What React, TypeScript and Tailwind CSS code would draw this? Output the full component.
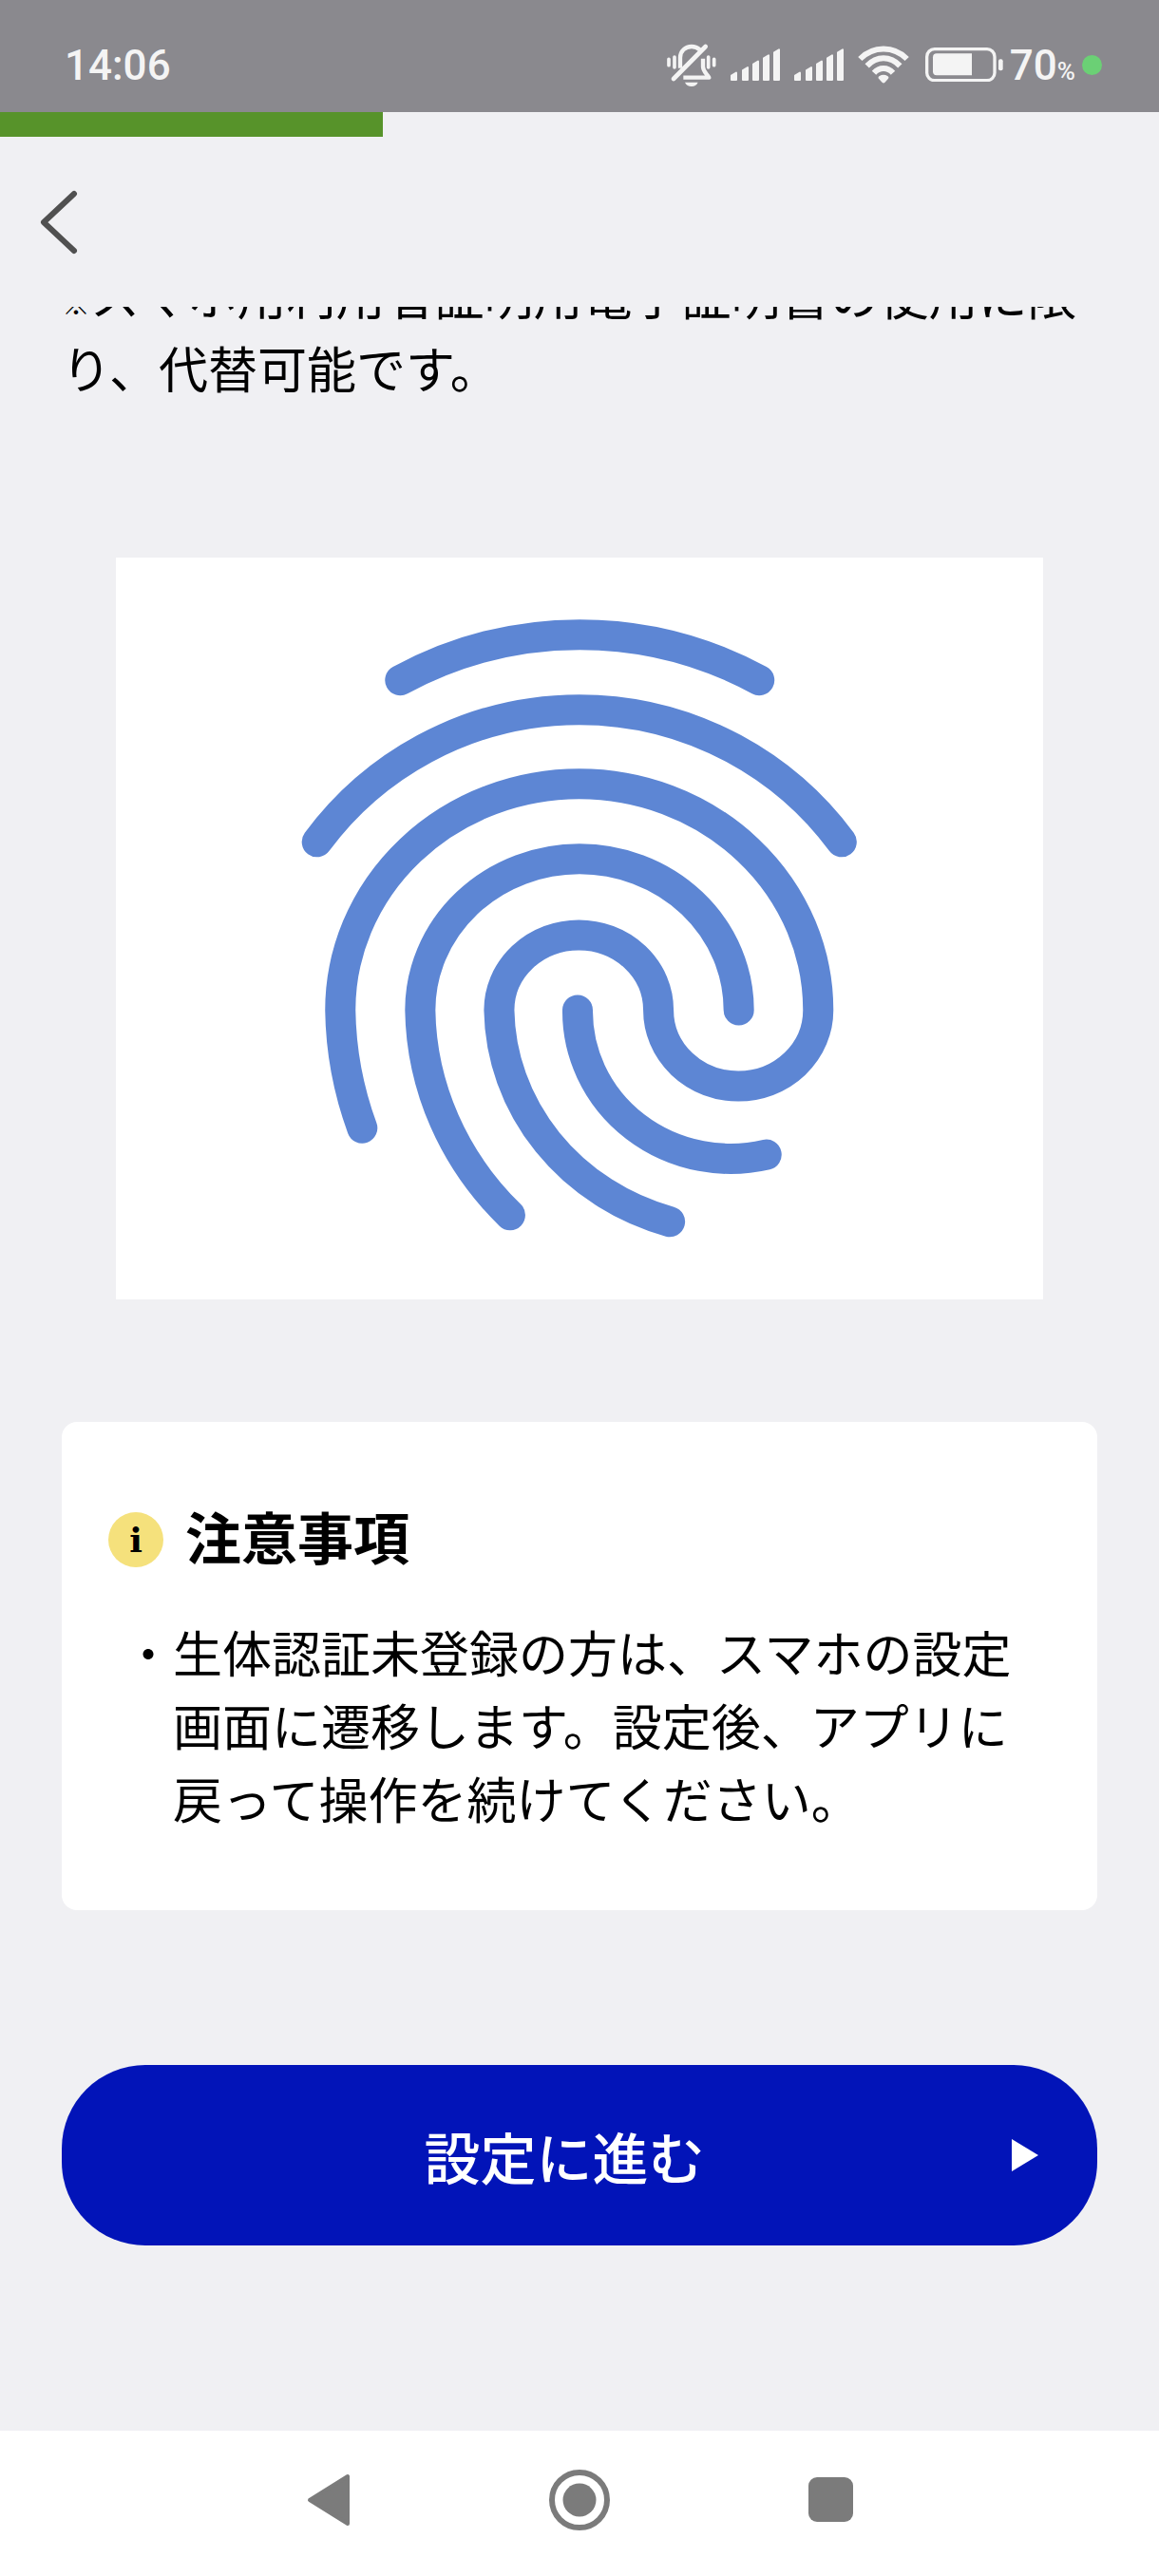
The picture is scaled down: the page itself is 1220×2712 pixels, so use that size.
import React from "react";

const BARS = [
  { x: 270, top: 165 },
  { x: 306, top: 148 },
  { x: 339, top: 129 },
  { x: 372, top: 110 },
  { x: 405, top: 92 },
];

export default function App() {
  return (
    <div className="flex min-h-screen flex-col bg-[#f0f0f3] font-['Noto_Sans_CJK_JP',sans-serif] text-black">
      <StatusBar />
      <div className="h-[26px] w-full">
        <div className="h-full w-[33%] bg-[#57932a]" />
      </div>

      <header className="flex h-[179px] items-center px-[33px]">
        <button type="button" aria-label="戻る" className="p-2">
          <BackChevron />
        </button>
      </header>

      <main className="flex flex-1 flex-col overflow-hidden px-[65px]">
        <p className="-mt-[52px] text-[52px] leading-[77px]">
          <span className="align-middle text-[30px] leading-none font-bold">※</span>
          スマホ用利用者証明用電子証明書の使用に限り、代替可能です。
        </p>

        <div className="mx-[57px] mt-[162px] bg-white">
          <Fingerprint />
        </div>

        <section className="mt-[129px] rounded-2xl bg-white px-[49px] pt-[77px] pb-[80px]">
          <div className="flex items-center gap-[23px]">
            <span className="flex size-[58px] items-center justify-center rounded-full bg-[#f5e17c] font-['DejaVu_Serif',serif] text-[36px] leading-none font-bold">
              i
            </span>
            <h2 className="pb-2 text-[59px] leading-[86px] font-bold">注意事項</h2>
          </div>
          <ul className="mt-8 ml-4 text-[52px] leading-[77px]">
            <li className="flex">
              <span>・</span>
              <span className="flex-1">
                生体認証未登録の方は、スマホの設定画面に遷移します。設定後、アプリに戻って操作を続けてください。
              </span>
            </li>
          </ul>
        </section>

        <button
          type="button"
          className="mt-[163px] mb-[195px] flex h-[190px] items-center rounded-[88px] bg-[#0214b8] px-[62px] text-white"
        >
          <span className="flex-1 pt-0.5 pr-1 text-center text-[59px] leading-[87px] font-medium">
            設定に進む
          </span>
          <svg viewBox="0 0 28 34" className="h-[34px] w-[28px]" fill="currentColor">
            <path d="M0 0 28 17 0 34Z" />
          </svg>
        </button>
      </main>

      <NavigationBar />
    </div>
  );
}

function StatusBar() {
  return (
    <div className="flex h-[118px] items-center justify-between bg-[#8a898e] pt-[18px] pr-[60px] pl-[68px] font-[Roboto,sans-serif] text-[#f4f4f4]">
      <span className="pt-0.5 text-[44px] leading-none font-medium">14:06</span>
      <div className="flex items-center gap-[17px]">
        <div className="flex items-center gap-[15px]">
          <MutedBell />
          <Signal />
          <Signal />
          <Wifi />
        </div>
        <div className="flex items-center gap-[7px]">
          <Battery />
          <span className="flex items-baseline pt-0.5 text-[44px] leading-none font-medium">
            70<span className="text-[26px] leading-none">%</span>
          </span>
          <span className="size-[21px] rounded-full bg-[#6bd075]" />
        </div>
      </div>
    </div>
  );
}

function MutedBell() {
  return (
    <svg viewBox="66 66 156 150" className="h-[50px] w-[52px]" fill="none" stroke="currentColor" strokeLinecap="round">
      <path d="M108 152V119C108 98 124 84 144 84C154 84 163 88 171 95" strokeWidth="13" strokeLinecap="butt" />
      <path d="M180 122V148C180 162 190 168 199 182H118" strokeWidth="13" strokeLinejoin="round" strokeLinecap="butt" />
      <path d="M87 186 188 84" strokeWidth="14" />
      <path d="M90 117V150M197 117V150" strokeWidth="11" />
      <path d="M72 124V143M215 124V143" strokeWidth="11" />
      <path d="M123 197H164C160 206 153 210 144 210C134 210 127 206 123 197Z" fill="currentColor" stroke="none" />
    </svg>
  );
}

function Signal() {
  return (
    <svg viewBox="270 92 156 102" className="h-[34px] w-[52px]" fill="currentColor" stroke="currentColor" strokeWidth="6" strokeLinejoin="round">
      {BARS.map(({ x, top }) => (
        <path key={x} d={`M${x + 3} ${top + 13}L${x + 18} ${top + 4}V191H${x + 3}Z`} />
      ))}
    </svg>
  );
}

function Wifi() {
  return (
    <svg viewBox="668 82 162 120" className="h-[40px] w-[54px]" fill="none" stroke="currentColor" strokeWidth="18">
      <path d="M675 124C717 82 781 82 823 124" />
      <path d="M697 146C728 114 770 114 801 146" />
      <path d="M719 168C736 149 762 149 779 168" />
      <path d="M739 183Q749 178 759 183L749 194Z" fill="currentColor" strokeWidth="12" strokeLinejoin="round" />
    </svg>
  );
}

function Battery() {
  return (
    <svg viewBox="102 86 246 108" className="h-[36px] w-[82px]" fill="currentColor">
      <rect x="107" y="91" width="214" height="99" rx="24" fill="none" stroke="currentColor" strokeWidth="10" />
      <path d="M249 105V174H138Q126 174 126 162V117Q126 105 138 105Z" />
      <rect x="333" y="123" width="14" height="36" rx="6" />
    </svg>
  );
}

function BackChevron() {
  return (
    <svg viewBox="0 0 42 68" className="h-[68px] w-[42px]" fill="none" stroke="#505050" strokeWidth="6" strokeLinecap="round" strokeLinejoin="round">
      <path d="M37 4 5 34 37 64" />
    </svg>
  );
}

function Fingerprint() {
  return (
    <svg viewBox="0 0 975 780" className="block w-full" fill="none" stroke="#5d86d4" strokeWidth="32" strokeLinecap="round">
      <path d="M299 129A396 396 0 0 1 676.500 129" />
      <path d="M211.500 299A343 343 0 0 1 763 299" />
      <path d="M259 600A418 395 0 0 1 236 476A251.250 238 0 0 1 738.500 476A84 80 0 0 1 570.500 476A83.750 79 0 0 0 403 476A251 236 0 0 0 582.500 698.500" />
      <path d="M655 476A167.500 159 0 0 0 320 476A334 316 0 0 0 414.500 691.500" />
      <path d="M485.500 476A161 155 0 0 0 684 628" />
    </svg>
  );
}

function NavigationBar() {
  return (
    <nav className="flex h-[153px] items-center justify-center bg-white pb-[8px] text-[#7b7b7b]">
      <button type="button" aria-label="前の画面" className="flex w-[264px] justify-center">
        <svg viewBox="0 0 46 56" className="h-[56px] w-[46px]" fill="currentColor" stroke="currentColor" strokeWidth="4" strokeLinejoin="round">
          <path d="M43 3V53L3 28Z" />
        </svg>
      </button>
      <button type="button" aria-label="ホーム" className="flex w-[264px] justify-center">
        <svg viewBox="0 0 64 64" className="size-16">
          <circle cx="32" cy="32" r="29" fill="none" stroke="currentColor" strokeWidth="6" />
          <circle cx="32" cy="32" r="17.500" fill="currentColor" />
        </svg>
      </button>
      <button type="button" aria-label="アプリ履歴" className="flex w-[264px] justify-center">
        <span className="size-[47px] rounded-[9px] bg-current" />
      </button>
    </nav>
  );
}
